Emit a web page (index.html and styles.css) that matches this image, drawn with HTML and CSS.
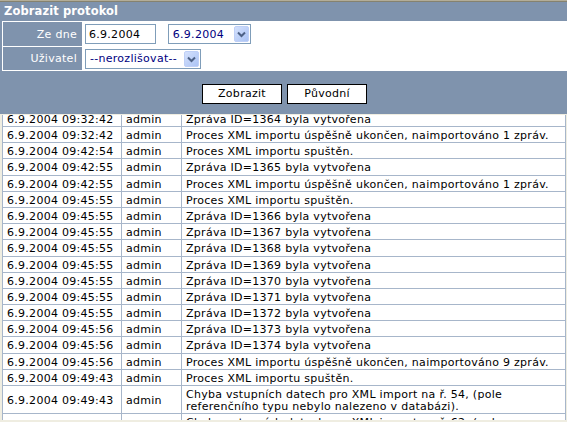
FILE: index.html
```html
<!DOCTYPE html>
<html lang="cs">
<head>
<meta charset="utf-8">
<title>Zobrazit protokol</title>
<link rel="stylesheet" href="styles.css">
</head>
<body>
<div class="chrome"></div>
<div class="panel">
  <div class="title">Zobrazit protokol</div>
  <table class="filters">
    <tr class="row-date">
      <td class="label">Ze dne</td>
      <td class="value">
        <span class="field text-field">6.9.2004</span>
        <span class="field select date-select"><span class="sel-text">6.9.2004</span>
          <svg class="arrow" width="15" height="16" viewBox="0 0 15 16"><defs><linearGradient id="ag1" x1="0" y1="0" x2="1" y2="1"><stop offset="0" stop-color="#d6e2fd"/><stop offset="1" stop-color="#a9c2f4"/></linearGradient></defs><rect x="0.5" y="0.5" width="14" height="15" rx="1.5" fill="url(#ag1)" stroke="#bfd0f7"/><polyline points="4,6.5 7.5,10 11,6.5" fill="none" stroke="#4d6185" stroke-width="2"/></svg>
        </span>
      </td>
    </tr>
    <tr class="row-user">
      <td class="label">Uživatel</td>
      <td class="value">
        <span class="field select user-select"><span class="sel-text">--nerozlišovat--</span>
          <svg class="arrow" width="15" height="16" viewBox="0 0 15 16"><defs><linearGradient id="ag2" x1="0" y1="0" x2="1" y2="1"><stop offset="0" stop-color="#d6e2fd"/><stop offset="1" stop-color="#a9c2f4"/></linearGradient></defs><rect x="0.5" y="0.5" width="14" height="15" rx="1.5" fill="url(#ag2)" stroke="#bfd0f7"/><polyline points="4,6.5 7.5,10 11,6.5" fill="none" stroke="#4d6185" stroke-width="2"/></svg>
        </span>
      </td>
    </tr>
  </table>
  <div class="actions">
    <button class="btn" type="button">Zobrazit</button>
    <button class="btn" type="button">Původní</button>
  </div>
</div>
<div class="log">
  <table class="records">
    <colgroup><col class="c-time"><col class="c-user"><col class="c-msg"></colgroup>
    <tr><td>6.9.2004 09:32:42</td><td>admin</td><td>Zpráva ID=1364 byla vytvořena</td></tr>
    <tr><td>6.9.2004 09:32:42</td><td>admin</td><td>Proces XML importu úspěšně ukončen, naimportováno 1 zpráv.</td></tr>
    <tr><td>6.9.2004 09:42:54</td><td>admin</td><td>Proces XML importu spuštěn.</td></tr>
    <tr><td>6.9.2004 09:42:55</td><td>admin</td><td>Zpráva ID=1365 byla vytvořena</td></tr>
    <tr><td>6.9.2004 09:42:55</td><td>admin</td><td>Proces XML importu úspěšně ukončen, naimportováno 1 zpráv.</td></tr>
    <tr><td>6.9.2004 09:45:55</td><td>admin</td><td>Proces XML importu spuštěn.</td></tr>
    <tr><td>6.9.2004 09:45:55</td><td>admin</td><td>Zpráva ID=1366 byla vytvořena</td></tr>
    <tr><td>6.9.2004 09:45:55</td><td>admin</td><td>Zpráva ID=1367 byla vytvořena</td></tr>
    <tr><td>6.9.2004 09:45:55</td><td>admin</td><td>Zpráva ID=1368 byla vytvořena</td></tr>
    <tr><td>6.9.2004 09:45:55</td><td>admin</td><td>Zpráva ID=1369 byla vytvořena</td></tr>
    <tr><td>6.9.2004 09:45:55</td><td>admin</td><td>Zpráva ID=1370 byla vytvořena</td></tr>
    <tr><td>6.9.2004 09:45:55</td><td>admin</td><td>Zpráva ID=1371 byla vytvořena</td></tr>
    <tr><td>6.9.2004 09:45:55</td><td>admin</td><td>Zpráva ID=1372 byla vytvořena</td></tr>
    <tr><td>6.9.2004 09:45:56</td><td>admin</td><td>Zpráva ID=1373 byla vytvořena</td></tr>
    <tr><td>6.9.2004 09:45:56</td><td>admin</td><td>Zpráva ID=1374 byla vytvořena</td></tr>
    <tr><td>6.9.2004 09:45:56</td><td>admin</td><td>Proces XML importu úspěšně ukončen, naimportováno 9 zpráv.</td></tr>
    <tr><td>6.9.2004 09:49:43</td><td>admin</td><td>Proces XML importu spuštěn.</td></tr>
    <tr><td>6.9.2004 09:49:43</td><td>admin</td><td>Chyba vstupních datech pro XML import na ř. 54, (pole<br>referenčního typu nebylo nalezeno v databázi).</td></tr>
    <tr><td>6.9.2004 09:49:43</td><td>admin</td><td>Chyba vstupních datech pro XML import na ř. 62, (pole<br>referenčního typu nebylo nalezeno v databázi).</td></tr>
  </table>
</div>
</body>
</html>
```

FILE: styles.css
```css
* { box-sizing: border-box; }

html, body {
  margin: 0;
  padding: 0;
  height: 422px;
  overflow: hidden;
  background: #efede1;
}

body {
  font-family: "DejaVu Sans", Verdana, sans-serif;
  font-size: 11px;
  letter-spacing: 0.28px;
  color: #000;
}

.chrome {
  height: 2px;
  border-top: 1px solid #b3ad98;
  border-bottom: 1px solid #85826f;
}

.panel {
  background: #7f93ad;
  padding-left: 2px;
}

.title {
  height: 19px;
  line-height: 19px;
  padding-left: 4px;
  margin-left: -2px;
  color: #fff;
  font-weight: bold;
  font-size: 11.5px;
  letter-spacing: 0.1px;
}

.filters {
  width: 100%;
  border-spacing: 1px;
  background: #fff;
}

.filters td {
  padding: 0;
}

.row-date td { height: 24px; }
.row-user td { height: 23px; }

.label {
  width: 79px;
  background: #7f93ad;
  color: #fff;
  text-align: right;
  padding-right: 5px !important;
}

.value {
  background: #fff;
  padding-left: 2px !important;
}

.field {
  display: inline-flex;
  align-items: center;
  height: 20px;
  border: 1px solid #7f9db9;
  background: #fff;
  vertical-align: middle;
  white-space: nowrap;
}

.text-field {
  width: 71px;
  padding-left: 3px;
  color: #000;
}

.select {
  color: #000080;
  padding-left: 4px;
}

.date-select {
  width: 83px;
  margin-left: 8px;
}

.user-select {
  width: 116px;
  padding-left: 4px;
}

.sel-text {
  flex: 1;
}

.arrow {
  display: block;
  margin-right: 1px;
  flex: none;
}

.actions {
  height: 43px;
  display: flex;
  justify-content: center;
  align-items: flex-start;
  gap: 5px;
  padding-top: 13px;
}

.btn {
  width: 80px;
  height: 20px;
  padding: 0;
  margin: 0;
  border: 1px solid #000;
  background: #fff;
  color: #000;
  font-family: "DejaVu Sans", Verdana, sans-serif;
  font-size: 11px;
  letter-spacing: 0.28px;
  line-height: 18px;
}

.log {
  height: 308px;
  border-top: 1px solid #efede1;
  border-left: 2px solid #efede1;
  border-right: 1px solid #efede1;
  border-bottom: 2px solid #efede1;
  overflow: hidden;
  background: #fff;
}

.records {
  width: 100%;
  border-collapse: collapse;
  margin-top: -5.2px;
  border: 1px solid #a7b6ca;
}

.c-time { width: 119px; }
.c-user { width: 60px; }

.records td {
  border: 1px solid #a7b6ca;
  padding: 3px 4px 0.2px;
  line-height: 12px;
  white-space: nowrap;
  vertical-align: middle;
}
```
